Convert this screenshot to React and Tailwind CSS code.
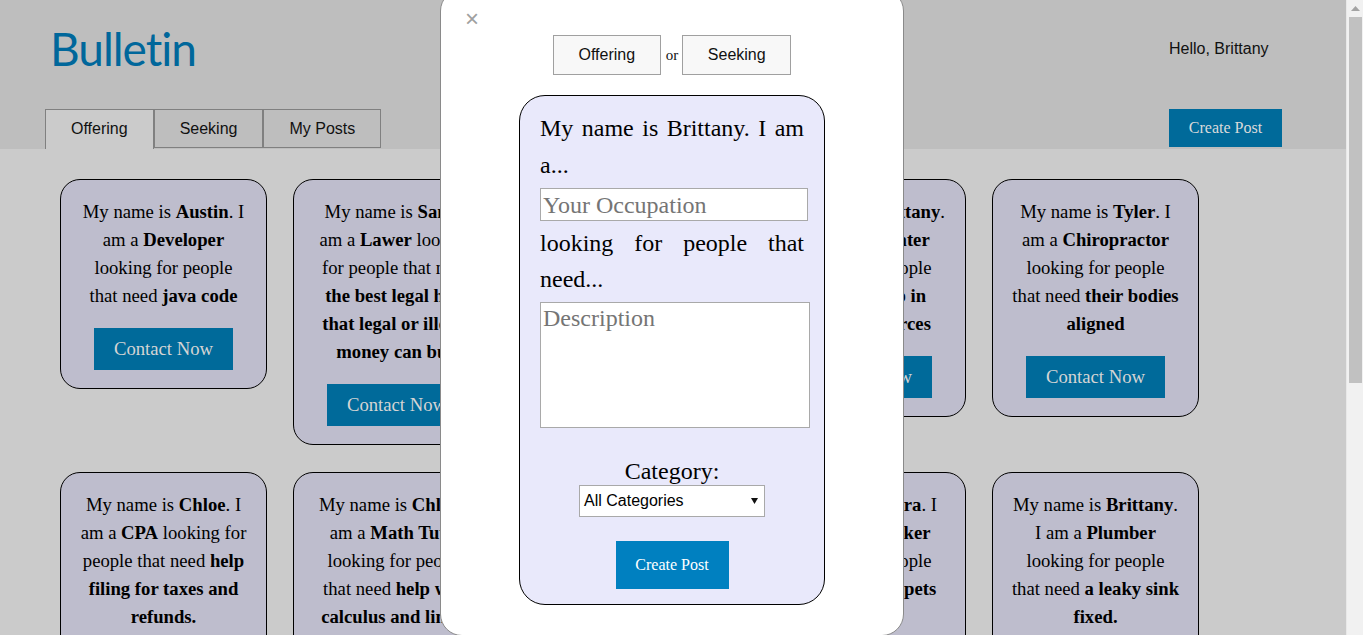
import React from "react";

const serif = { fontFamily: '"Liberation Serif", "Times New Roman", serif' };

function Card({ children }) {
  return (
    <div
      className="w-[207px] flex flex-col items-center rounded-[20px] border border-black bg-[#bebdcd] px-[18px] text-center text-[18.7px] leading-[28px] text-black"
      style={serif}
    >
      <p className="mt-[18px] mb-[18px]">{children}</p>
      <div className="mb-[18px] flex h-[42px] w-[139px] items-center justify-center bg-[#006a9a] text-[18.7px] text-[#d4d4d4]">
        Contact Now
      </div>
    </div>
  );
}

const B = ({ children }) => <b className="font-bold">{children}</b>;

export default function App() {
  return (
    <div
      className="relative flex h-[635px] w-[1363px] overflow-hidden"
      style={{ fontFamily: '"Liberation Sans", Arial, sans-serif' }}
    >
      <div className="flex w-[1346px] flex-col bg-[#cbcbcb]">
        {/* header */}
        <div className="flex h-[149px] shrink-0 bg-[#bebebe]">
          <div className="flex flex-col justify-between">
            <div
              className="ml-[50px] mt-[21px] text-[46px] leading-[56px] tracking-[-1px] text-[#00679b]"
              style={{ fontFamily: 'Lato, "Open Sans", sans-serif' }}
            >
              Bulletin
            </div>
            <div className="ml-[45px] flex items-start">
              <div className="flex h-[40px] items-center border border-b-0 border-[#808080] bg-[#cbcbcb] px-[25px] pb-[1px] text-[16px] text-[#111]">
                Offering
              </div>
              <div className="flex h-[39px] items-center border border-[#808080] px-[25px] text-[16px] text-[#111]">
                Seeking
              </div>
              <div className="flex h-[39px] items-center border border-[#808080] px-[25px] text-[16px] text-[#111]">
                My Posts
              </div>
            </div>
          </div>
          <div className="ml-auto mr-[64px] flex flex-col items-start">
            <div className="mt-[39px] text-[16px] leading-[20px] text-[#111]">Hello, Brittany</div>
            <div
              className="mt-[50px] flex h-[38px] w-[113px] items-center justify-center bg-[#006a9a] text-[16px] text-[#dadada]"
              style={serif}
            >
              Create Post
            </div>
          </div>
        </div>

        {/* cards */}
        <div className="flex flex-wrap items-start gap-x-[26px] gap-y-[27px] pl-[60px] pt-[30px]">
          <Card>
            My name is <B>Austin</B>. I am a <B>Developer</B> looking for people that need <B>java code</B>
          </Card>
          <Card>
            My name is <B>Sam</B>. I am a <B>Lawer</B> looking for people that need <B>the best legal help that legal or illegal money can buy</B>
          </Card>
          <Card>
            My name is <B>Jake</B>. I am a <B>Designer</B> looking for people that need <B>a new logo</B>
          </Card>
          <Card>
            My name is <B>Brittany</B>. I am a <B>Carpenter</B> looking for people that need <B>help in finding resources</B>
          </Card>
          <Card>
            My name is <B>Tyler</B>. I am a <B>Chiropractor</B> looking for people that need <B>their bodies aligned</B>
          </Card>
          <Card>
            My name is <B>Chloe</B>. I am a <B>CPA</B> looking for people that need <B>help filing for taxes and refunds.</B>
          </Card>
          <Card>
            My name is <B>Chloe</B>. I am a <B>Math Tutor</B> looking for people that need <B>help with calculus and linear algebra</B>
          </Card>
          <Card>
            My name is <B>Max</B>. I am a <B>Chef</B> looking for people that need <B>dinner cooked</B>
          </Card>
          <Card>
            My name is <B>Dora</B>. I am a <B>Dog Walker</B> looking for people that need <B>their pets walked</B>
          </Card>
          <Card>
            My name is <B>Brittany</B>. I am a <B>Plumber</B> looking for people that need <B>a leaky sink fixed.</B>
          </Card>
        </div>
      </div>

      {/* scrollbar */}
      <div className="flex w-[17px] flex-col items-center border-l border-[#e8e8e8] bg-[#f1f1f1]">
        <div className="flex h-[17px] w-full items-center justify-center">
          <svg width="9" height="5" viewBox="0 0 9 5"><path d="M0 5 L4.5 0 L9 5 Z" fill="#a3a3a3" /></svg>
        </div>
        <div className="h-[366px] w-[13px] bg-[#c1c1c1]" />
      </div>

      {/* modal */}
      <div className="absolute left-[440px] top-[-11px] flex h-[647px] w-[464px] flex-col items-center rounded-[22px] border border-[#8a8a8a] bg-white pt-[45px]">
        <div className="absolute left-[24px] top-[17px] text-[24px] leading-[24px] text-[#a0a0a0]">×</div>
        <div className="flex items-center">
          <div className="flex h-[40px] w-[108px] items-center justify-center border border-[#a0a0a0] bg-[#f8f8f8] text-[16px] text-[#111]">
            Offering
          </div>
          <span className="ml-[5px] mr-[4px] text-[15px] text-[#111]" style={serif}>or</span>
          <div className="flex h-[40px] w-[109px] items-center justify-center border border-[#a0a0a0] bg-[#f8f8f8] text-[16px] text-[#111]">
            Seeking
          </div>
        </div>

        <div
          className="mt-[20px] flex w-[306px] flex-col rounded-[26px] border border-black bg-[#e9e9fb] px-[20px] pb-[15px] pt-[14px] text-black"
          style={serif}
        >
          <p className="text-justify text-[24px] leading-[37px]">My name is Brittany. I am a...</p>
          <input
            className="mt-[4px] block h-[33px] w-[268px] border border-[#a9a9a9] bg-white px-[2px] text-[24px] text-black outline-none placeholder:text-[#757575]"
            style={serif}
            placeholder="Your Occupation"
          />
          <p className="mt-[4px] text-justify text-[24px] leading-[36px]">looking for people that need...</p>
          <textarea
            className="mt-[5px] block h-[126px] w-[270px] resize-none border border-[#a9a9a9] bg-white px-[2px] py-0 text-[24px] leading-[30px] text-black outline-none placeholder:text-[#757575]"
            style={serif}
            placeholder="Description"
          />
          <div className="mt-[30px] text-center text-[24px] leading-[26px]">Category:</div>
          <div
            className="mx-auto mt-[1px] flex h-[32px] w-[186px] items-center justify-between border border-[#a9a9a9] bg-white pl-[4px] pr-[6px] text-[16px] text-black"
            style={{ fontFamily: '"Liberation Sans", Arial, sans-serif' }}
          >
            <span>All Categories</span>
            <svg width="7" height="6" viewBox="0 0 7 6"><path d="M0 0 L7 0 L3.5 6 Z" fill="#111" /></svg>
          </div>
          <div className="mx-auto mt-[24px] flex h-[48px] w-[113px] items-center justify-center bg-[#0080c0] text-[16px] text-white">
            Create Post
          </div>
        </div>
      </div>
    </div>
  );
}
